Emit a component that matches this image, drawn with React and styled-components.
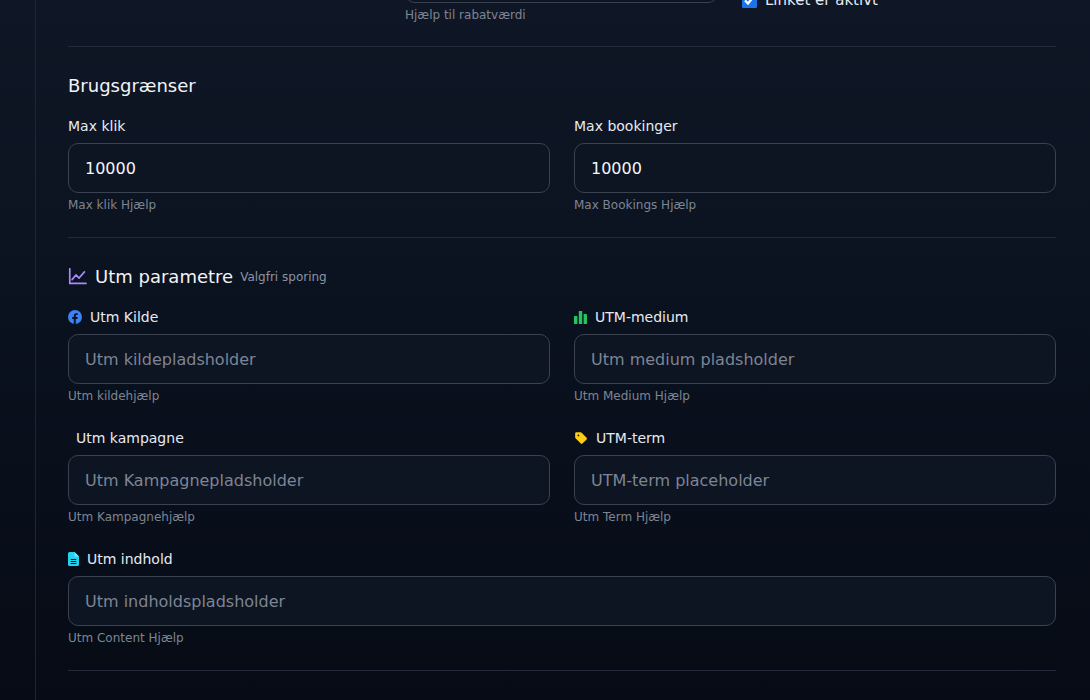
import React from 'react'
import styled, { createGlobalStyle } from 'styled-components'

const Global = createGlobalStyle`
  html, body { margin: 0; padding: 0; height: 100%; overflow: hidden; }
  body { font-family: "DejaVu Sans", "Noto Sans", sans-serif; background: #0b1220; }
`

const Page = styled.div`
  display: flex;
  height: 700px;
  background: linear-gradient(180deg, #0f1726 0%, #0a111e 50%, #060b15 100%);
`

const Side = styled.div`
  width: 35px;
  flex-shrink: 0;
  border-right: 1px solid #1e2535;
`

const Main = styled.div`
  flex: 1;
  padding: 0 34px 0 32px;
  overflow: hidden;
`

const TopRow = styled.div`
  display: grid;
  grid-template-columns: 313px 313px 1fr;
  gap: 24px;
  margin-top: -45px;
  padding-bottom: 24px;
  border-bottom: 1px solid #232b3b;
`

const Section = styled.section`
  padding: 28px 0 25px;
  border-bottom: 1px solid #232b3b;
`

const Heading = styled.h3`
  display: flex;
  align-items: center;
  gap: 8px;
  margin: 0 0 21px;
  font-size: 18px;
  font-weight: 400;
  color: #f1f3f7;
  small { font-size: 12px; color: #8b93a3; margin-left: -1px; }
`

const Grid = styled.div`
  display: grid;
  grid-template-columns: ${p => (p.$single ? '1fr' : '1fr 1fr')};
  gap: 26px 24px;
`

const Field = styled.div`
  display: flex;
  flex-direction: column;
  grid-column: ${p => (p.$wide ? '1 / -1' : 'auto')};
`

const Label = styled.label`
  display: flex;
  align-items: center;
  gap: 8px;
  height: 18px;
  margin-bottom: 8px;
  font-size: 14px;
  color: #e7eaf0;
  padding-left: ${p => p.$indent || 0}px;
`

const Input = styled.input`
  box-sizing: border-box;
  height: 50px;
  width: 100%;
  padding: 0 16px;
  border: 1px solid #3a4252;
  border-radius: 10px;
  background: #0d1422;
  color: #f4f6fa;
  font-family: inherit;
  font-size: 16px;
  outline: none;
  &::placeholder { color: #7d8594; }
`

const Help = styled.div`
  margin-top: 5px;
  font-size: 12px;
  color: #7d8594;
`

const Check = styled.label`
  display: flex;
  align-items: center;
  gap: 8px;
  color: #e7eaf0;
  font-size: 15px;
  margin-top: 36px;
  align-self: start;
  input { margin: 0; width: 15px; height: 15px; accent-color: #1a73e8; }
`

const FbIcon = () => (
  <svg width="14" height="14" viewBox="0 0 24 24"><circle cx="12" cy="12" r="12" fill="#3b82f6"/><path d="M13.3 24v-8.6h2.8l.4-3.3h-3.2V10c0-.9.3-1.6 1.6-1.6h1.7V5.5c-.3 0-1.3-.1-2.5-.1-2.5 0-4.2 1.5-4.2 4.3v2.4H7.1v3.3h2.8V24z" fill="#0b1220"/></svg>
)
const BarIcon = () => (
  <svg width="13" height="13" viewBox="0 0 13 13" fill="#22c55e"><rect x="0" y="5" width="3.4" height="8" rx="0.6"/><rect x="4.8" y="0" width="3.4" height="13" rx="0.6"/><rect x="9.6" y="3" width="3.4" height="10" rx="0.6"/></svg>
)
const TagIcon = () => (
  <svg width="14" height="14" viewBox="0 0 24 24" fill="#facc15"><path d="M2 4a2 2 0 012-2h7.2a2 2 0 011.4.6l9 9a2 2 0 010 2.8l-7.2 7.2a2 2 0 01-2.8 0l-9-9A2 2 0 012 11.2zm5.5 5a1.5 1.5 0 100-3 1.5 1.5 0 000 3z"/></svg>
)
const DocIcon = () => (
  <svg width="11" height="14" viewBox="0 0 11 14"><path d="M1.5 0h5L11 4.5V12.5A1.5 1.5 0 019.5 14h-8A1.5 1.5 0 010 12.5v-11A1.5 1.5 0 011.5 0z" fill="#22d3ee"/><path d="M6.5 0v4.5H11" fill="#7ee8f7"/><path d="M2.7 7.5h5.6M2.7 9.5h5.6M2.7 11.5h5.6" stroke="#0b1220" strokeWidth="1"/></svg>
)
const ChartIcon = () => (
  <svg width="19" height="17" viewBox="0 0 24 22" fill="none" stroke="#a78bfa" strokeWidth="2.2" strokeLinecap="round" strokeLinejoin="round"><path d="M2 1v19h21"/><path d="M5 15l5-6 4 4 7-8"/></svg>
)

export default function App() {
  return (
    <Page>
      <Global />
      <Side />
      <Main>
        <TopRow>
          <div />
          <Field>
            <Input style={{ height: 48 }} />
            <Help>Hjælp til rabatværdi</Help>
          </Field>
          <Check><input type="checkbox" defaultChecked /> Linket er aktivt</Check>
        </TopRow>

        <Section>
          <Heading>Brugsgrænser</Heading>
          <Grid>
            <Field>
              <Label>Max klik</Label>
              <Input defaultValue="10000" />
              <Help>Max klik Hjælp</Help>
            </Field>
            <Field>
              <Label>Max bookinger</Label>
              <Input defaultValue="10000" />
              <Help>Max Bookings Hjælp</Help>
            </Field>
          </Grid>
        </Section>

        <Section>
          <Heading><ChartIcon />Utm parametre <small>Valgfri sporing</small></Heading>
          <Grid>
            <Field>
              <Label><FbIcon />Utm Kilde</Label>
              <Input placeholder="Utm kildepladsholder" />
              <Help>Utm kildehjælp</Help>
            </Field>
            <Field>
              <Label><BarIcon />UTM-medium</Label>
              <Input placeholder="Utm medium pladsholder" />
              <Help>Utm Medium Hjælp</Help>
            </Field>
            <Field>
              <Label $indent={8}>Utm kampagne</Label>
              <Input placeholder="Utm Kampagnepladsholder" />
              <Help>Utm Kampagnehjælp</Help>
            </Field>
            <Field>
              <Label><TagIcon />UTM-term</Label>
              <Input placeholder="UTM-term placeholder" />
              <Help>Utm Term Hjælp</Help>
            </Field>
            <Field $wide>
              <Label><DocIcon />Utm indhold</Label>
              <Input placeholder="Utm indholdspladsholder" />
              <Help>Utm Content Hjælp</Help>
            </Field>
          </Grid>
        </Section>
      </Main>
    </Page>
  )
}
